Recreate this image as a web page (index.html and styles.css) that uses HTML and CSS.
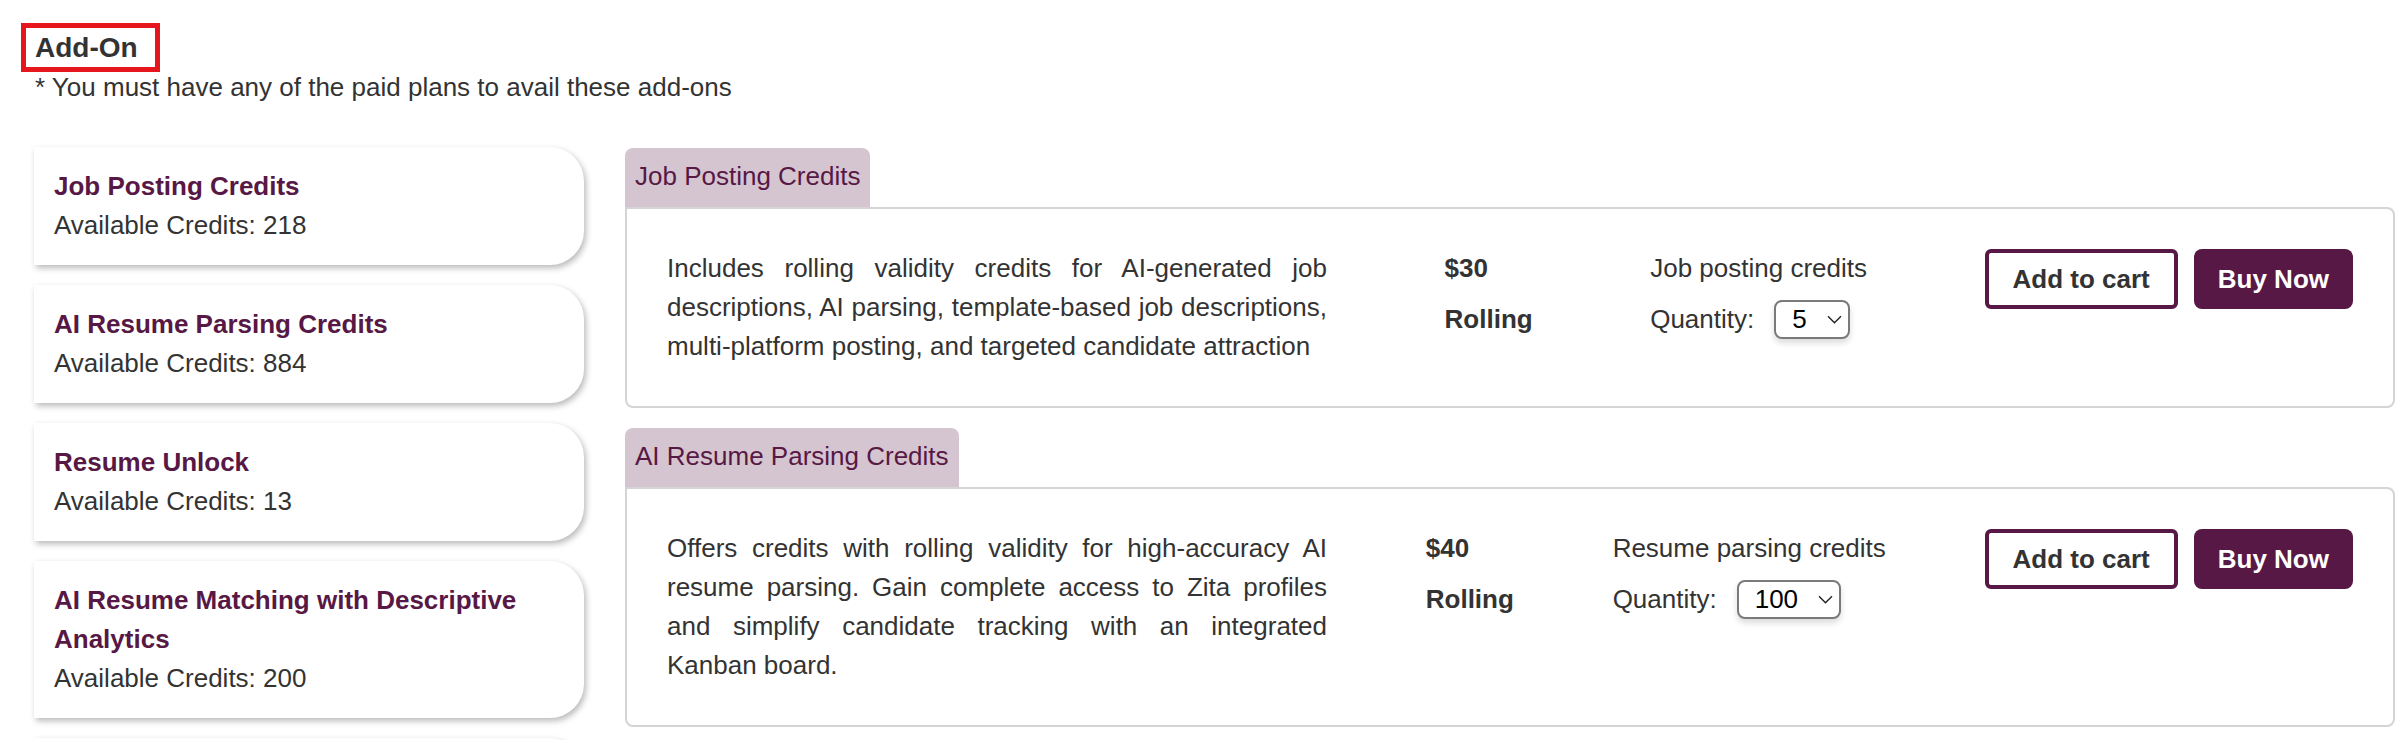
FILE: index.html
```html
<!DOCTYPE html>
<html lang="en">
<head>
<meta charset="utf-8">
<title>Add-On</title>
<link rel="stylesheet" href="styles.css">
</head>
<body>
<div class="page">
  <div class="head">
    <h1 class="heading">Add-On</h1>
  </div>
  <p class="note">* You must have any of the paid plans to avail these add-ons</p>

  <div class="layout">
    <div class="cards">
      <div class="card">
        <div class="card-title">Job Posting Credits</div>
        <div class="card-sub">Available Credits: 218</div>
      </div>
      <div class="card">
        <div class="card-title">AI Resume Parsing Credits</div>
        <div class="card-sub">Available Credits: 884</div>
      </div>
      <div class="card">
        <div class="card-title">Resume Unlock</div>
        <div class="card-sub">Available Credits: 13</div>
      </div>
      <div class="card">
        <div class="card-title">AI Resume Matching with Descriptive Analytics</div>
        <div class="card-sub">Available Credits: 200</div>
      </div>
      <div class="card card-empty" aria-hidden="true"></div>
    </div>

    <div class="plans">
      <div class="plan">
        <div class="tab">Job Posting Credits</div>
        <div class="box">
          <p class="desc">Includes rolling validity credits for AI-generated job descriptions, AI parsing, template-based job descriptions, multi-platform posting, and targeted candidate attraction</p>
          <div class="price">
            <div class="line">$30</div>
            <div class="line">Rolling</div>
          </div>
          <div class="type">
            <div class="line">Job posting credits</div>
            <div class="qty">
              <span class="line">Quantity:</span>
              <div class="select">
                <span>5</span>
                <svg class="chev" width="15" height="9" viewBox="0 0 15 9"><path d="M1 1.2 L7.5 7.8 L14 1.2" fill="none" stroke="#222" stroke-width="1.4"/></svg>
              </div>
            </div>
          </div>
          <div class="actions">
            <button class="btn btn-outline">Add to cart</button>
            <button class="btn btn-fill">Buy Now</button>
          </div>
        </div>
      </div>

      <div class="plan">
        <div class="tab">AI Resume Parsing Credits</div>
        <div class="box">
          <p class="desc">Offers credits with rolling validity for high-accuracy AI resume parsing. Gain complete access to Zita profiles and simplify candidate tracking with an integrated Kanban board.</p>
          <div class="price">
            <div class="line">$40</div>
            <div class="line">Rolling</div>
          </div>
          <div class="type">
            <div class="line">Resume parsing credits</div>
            <div class="qty">
              <span class="line">Quantity:</span>
              <div class="select">
                <span>100</span>
                <svg class="chev" width="15" height="9" viewBox="0 0 15 9"><path d="M1 1.2 L7.5 7.8 L14 1.2" fill="none" stroke="#222" stroke-width="1.4"/></svg>
              </div>
            </div>
          </div>
          <div class="actions">
            <button class="btn btn-outline">Add to cart</button>
            <button class="btn btn-fill">Buy Now</button>
          </div>
        </div>
      </div>
    </div>
  </div>
</div>
</body>
</html>
```

FILE: styles.css
```css
* {
  box-sizing: border-box;
}

html, body {
  margin: 0;
  padding: 0;
  background: #ffffff;
}

body {
  font-family: "Liberation Sans", Arial, Helvetica, sans-serif;
  font-size: 26px;
  color: #333333;
}

.page {
  padding: 23px 13px 0 34px;
}

.head {
  display: flex;
}

.heading {
  margin: 0 0 0 -13px;
  border: 5px solid #e5161c;
  padding: 4px 17px 4px 9px;
  font-size: 28px;
  line-height: 31px;
  font-weight: 700;
  color: #333333;
}

.note {
  margin: 0;
  padding-left: 1px;
  line-height: normal;
}

.layout {
  display: flex;
  gap: 41px;
  margin-top: 44px;
  align-items: flex-start;
}

.cards {
  flex: 0 0 550px;
  display: flex;
  flex-direction: column;
  gap: 20px;
}

.card {
  background: #ffffff;
  border-radius: 0 34px 34px 0;
  padding: 20px;
  line-height: 39px;
  box-shadow: 2px 3px 6px rgba(0, 0, 0, 0.28);
}

.card-empty {
  height: 118px;
}

.card-title {
  font-weight: 700;
  color: #581845;
}

.card-sub {
  color: #333333;
}

.plans {
  flex: 1 1 auto;
  margin-top: 1px;
}

.plan {
  margin-bottom: 20px;
}

.tab {
  width: fit-content;
  background: #d5c5d0;
  color: #581845;
  line-height: 39px;
  padding: 9px 10px 11px;
  border-radius: 8px 8px 0 0;
}

.box {
  border: 2px solid #d4d4d4;
  border-radius: 0 8px 8px 8px;
  padding: 40px 40px 40px;
  display: flex;
  justify-content: space-between;
  align-items: flex-start;
  line-height: 39px;
}

.desc {
  flex: 0 0 660px;
  margin: 0;
  text-align: justify;
  color: #333333;
}

.price {
  display: flex;
  flex-direction: column;
  gap: 12px;
  font-weight: 700;
}

.type {
  display: flex;
  flex-direction: column;
  gap: 12px;
}

.qty {
  display: flex;
  align-items: center;
  gap: 20px;
}

.select {
  display: flex;
  align-items: center;
  gap: 20px;
  height: 39px;
  border: 2px solid #7a7a7a;
  border-radius: 8px;
  padding: 0 6px 0 16px;
  color: #000000;
  background: #ffffff;
  box-shadow: 0 4px 6px rgba(0, 0, 0, 0.14);
}

.chev {
  display: block;
}

.actions {
  display: flex;
  gap: 16px;
}

.btn {
  height: 60px;
  padding: 0 24px;
  font-family: inherit;
  font-size: 26px;
  font-weight: 700;
  cursor: pointer;
}

.btn-outline {
  background: #ffffff;
  color: #333333;
  border: 4px solid #581845;
  border-radius: 6px;
}

.btn-fill {
  background: #581845;
  color: #ffffff;
  border: none;
  border-radius: 8px;
}
```
